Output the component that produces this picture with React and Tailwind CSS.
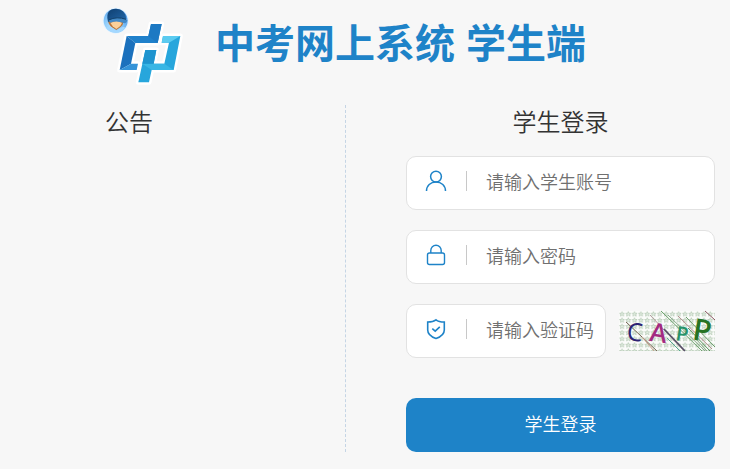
import React, { useState } from 'react';

const Logo = () => (
  <svg viewBox="0 0 330 285" className="w-[110px] h-[95px] shrink-0" aria-hidden="true">
    <defs>
      <radialGradient id="badge" cx="35%" cy="75%" r="80%">
        <stop offset="0%" stopColor="#b4e2ff" />
        <stop offset="60%" stopColor="#7cc0f7" />
        <stop offset="100%" stopColor="#4a93e0" />
      </radialGradient>
      <linearGradient id="cap" x1="0" y1="0" x2="1" y2="1">
        <stop offset="0%" stopColor="#0f3f70" />
        <stop offset="100%" stopColor="#2268ab" />
      </linearGradient>
    </defs>

    {/* White edge round both letters */}
    <g fill="#fff" stroke="#fff" strokeWidth="15" strokeLinejoin="round">
      <path d="M110 108H175L183 72H215L203 129H136L123 191H144L140 210H89Z" />
      <path d="M219 108H271L251 210H185L177 247H145L166 150H199L191 191H223L237 128H215Z" />
    </g>

    {/* d */}
    <path d="M110 108H175L183 72H215L203 129H136Z" fill="#2081cb" />
    <path d="M110 108L136 129L123 191L89 210Z" fill="#1b71bd" />
    <path d="M123 191H144L140 210H89Z" fill="#3493d8" />
    <path d="M183 72H215L203 129L175 108Z" fill="#1d79c3" />

    {/* p */}
    <path d="M219 108H271L251 210H185L177 247H145L166 150H199L191 191H223L237 128H215Z" fill="#27a6dc" />
    <path d="M219 108H271L237 128H215Z" fill="#5bcbf0" />
    <path d="M191 191H223L251 210H185L157 191Z" fill="#38b6e5" />
    <path d="M166 150H199L191 191H157Z" fill="#1e94cf" />

    {/* Student badge */}
    <circle cx="77" cy="62" r="39" fill="#e4f3ff" />
    <circle cx="77" cy="62" r="36" fill="url(#badge)" />
    <path d="M54 62Q56 76 68 83L79 90L91 82Q100 75 100 66Z" fill="#b9753a" />
    <path d="M61 68L68 79L79 87L91 78L96 68L80 63Z" fill="#fbd09a" />
    <path d="M53 60Q47 27 78 26Q106 27 109 57L96 62Q73 56 54 66Z" fill="url(#cap)" />
    <path d="M56 60Q83 47 112 60Q111 69 103 70Q81 60 61 68Z" fill="#4389c6" />
    <path d="M56 60Q81 48 108 58" fill="none" stroke="#123f68" strokeWidth="3" />
    <path d="M48 84Q60 78 68 85L79 92L91 84Q101 78 106 83Q95 98 77 98Q59 98 48 84Z" fill="#a4d8ff" />
  </svg>
);

const UserIcon = () => (
  <svg viewBox="0 0 22 22" className="w-[22px] h-[22px]" fill="none" stroke="#1e83c8" strokeWidth="1.5">
    <circle cx="11" cy="6.6" r="5.4" />
    <path d="M1.5 21C1.5 15.5 5.5 12 11 12S20.500 15.500 20.500 21" />
  </svg>
);

const LockIcon = () => (
  <svg viewBox="0 0 22 22" className="w-[22px] h-[22px]" fill="none" stroke="#1e83c8" strokeWidth="1.4">
    <rect x="2.500" y="9" width="17" height="11.500" rx="2" />
    <path d="M5.800 9V6.500a5.200 5.200 0 0 1 10.400 0V9" />
  </svg>
);

const ShieldIcon = () => (
  <svg viewBox="0 0 22 22" className="w-[22px] h-[22px]" fill="none" stroke="#1e83c8" strokeWidth="1.6">
    <path d="M11 1.800C9 3.400 5.800 4 2.700 4V12C2.700 16.300 6.300 18.900 11 20.500C15.700 18.900 19.300 16.300 19.300 12V4C16.200 4 13 3.400 11 1.800Z" />
    <path d="M7.300 10.600L10.200 13.200L14.800 8.800" />
  </svg>
);

const Field = ({ id, icon: Icon, ...props }) => (
  <div className="flex-1 min-w-0 h-[54px] flex bg-white border border-[#e2e2e2] rounded-[10px]">
    <label htmlFor={id} aria-label={props.placeholder} className="flex shrink-0 pl-[18px] pt-[13px]">
      <Icon />
      <span className="ml-[19px] mt-px h-5 w-px bg-[#c8c8c8]"></span>
    </label>
    <input
      id={id}
      className="flex-1 min-w-0 ml-[19px] rounded-r-[10px] bg-transparent text-lg font-[350] text-[#333] placeholder:text-[#707070] outline-none"
      {...props}
    />
  </div>
);

const Captcha = () => (
  <svg viewBox="0 0 96 40" className="block w-24 h-10 overflow-visible">
    <defs>
      <pattern id="stars" width="6.300" height="6.200" patternUnits="userSpaceOnUse">
        <path d="M3 .6L3.700 2.300H5.500L4.100 3.400L4.700 5.200L3 4.100L1.300 5.200L1.900 3.400L.5 2.300H2.300Z" fill="#e7f1e6" stroke="#a5bfa5" strokeWidth=".6" />
      </pattern>
    </defs>
    <rect width="96" height="40" fill="#fbfcfa" />
    <rect width="96" height="40" fill="url(#stars)" />
    <g fill="none" strokeWidth="1">
      <path d="M7 11L38 40" stroke="#776655" />
      <path d="M23 26L35 40" stroke="#c8a18c" />
      <path d="M31 4L65 40" stroke="#b09999" />
      <path d="M42 0L83 40" stroke="#6aa06a" />
      <path d="M45 18L66 40" stroke="#555068" strokeWidth="1.600" />
      <path d="M49 4L86 40" stroke="#85a987" />
      <path d="M48 27L61 40" stroke="#55a68e" />
      <path d="M59 5L93 38" stroke="#b08b8b" />
      <path d="M67 6L96 36" stroke="#669966" />
      <path d="M69 17L91 40" stroke="#58935b" />
      <path d="M76 27L88 40" stroke="#7fa67f" />
      <path d="M86 0L96 9" stroke="#8b5561" />
    </g>
    <g fontFamily="Open Sans, Liberation Sans, sans-serif">
      <text x="8" y="30" fontSize="25" fontWeight="500" fill="#2d2474" transform="rotate(5 16 22)">C</text>
      <text x="31" y="31" fontSize="26" fontWeight="600" fill="#a32b81" transform="rotate(8 39 22)">A</text>
      <text x="57" y="30" fontSize="20" fontWeight="600" fill="#27936a" transform="rotate(9 63 23)">P</text>
      <text x="74" y="30" fontSize="30" fontWeight="600" fill="#267323" transform="rotate(9 84 19)">P</text>
    </g>
  </svg>
);

const App = () => {
  const [form, setForm] = useState({ account: '', password: '', code: '' });

  const handleChange = (e) => {
    setForm({ ...form, [e.target.name]: e.target.value });
  };

  return (
    <div className="min-h-screen bg-[#f7f7f7] text-[#333] font-['Liberation_Sans','Noto_Sans_CJK_SC',sans-serif]">
      {/* Header */}
      <header className="flex items-start pl-[90px] pb-[10px]">
        <Logo />
        <h1 className="ml-[15px] mt-5 text-[40px] leading-[48px] font-bold text-[#1e83c8] whitespace-nowrap">
          中考网上系统 学生端
        </h1>
      </header>

      <main className="grid grid-cols-[minmax(0,241fr)_minmax(0,309fr)] gap-x-[60px] pl-[105px] pr-[15px] pb-4">
        {/* Notices */}
        <section className="border-r border-dashed border-[#c5d5e5]">
          <h2 className="text-2xl leading-[35px] font-[350]">公告</h2>
        </section>

        {/* Login form */}
        <section>
          <h2 className="text-2xl leading-[35px] font-[350] text-center">学生登录</h2>
          <form className="mt-4 flex flex-col gap-5" onSubmit={(e) => e.preventDefault()}>
            <div className="flex">
              <Field id="account" name="account" type="text" icon={UserIcon} placeholder="请输入学生账号" value={form.account} onChange={handleChange} />
            </div>
            <div className="flex">
              <Field id="password" name="password" type="password" icon={LockIcon} placeholder="请输入密码" value={form.password} onChange={handleChange} />
            </div>
            <div className="flex items-center gap-[13px]">
              <Field id="code" name="code" type="text" icon={ShieldIcon} placeholder="请输入验证码" value={form.code} onChange={handleChange} />
              <button type="button" className="shrink-0 cursor-pointer">
                <Captcha />
              </button>
            </div>
            <button type="submit" className="mt-5 h-[54px] rounded-[10px] bg-[#1e83c8] text-lg font-[350] text-white cursor-pointer">
              学生登录
            </button>
          </form>
        </section>
      </main>
    </div>
  );
};

export default App;
